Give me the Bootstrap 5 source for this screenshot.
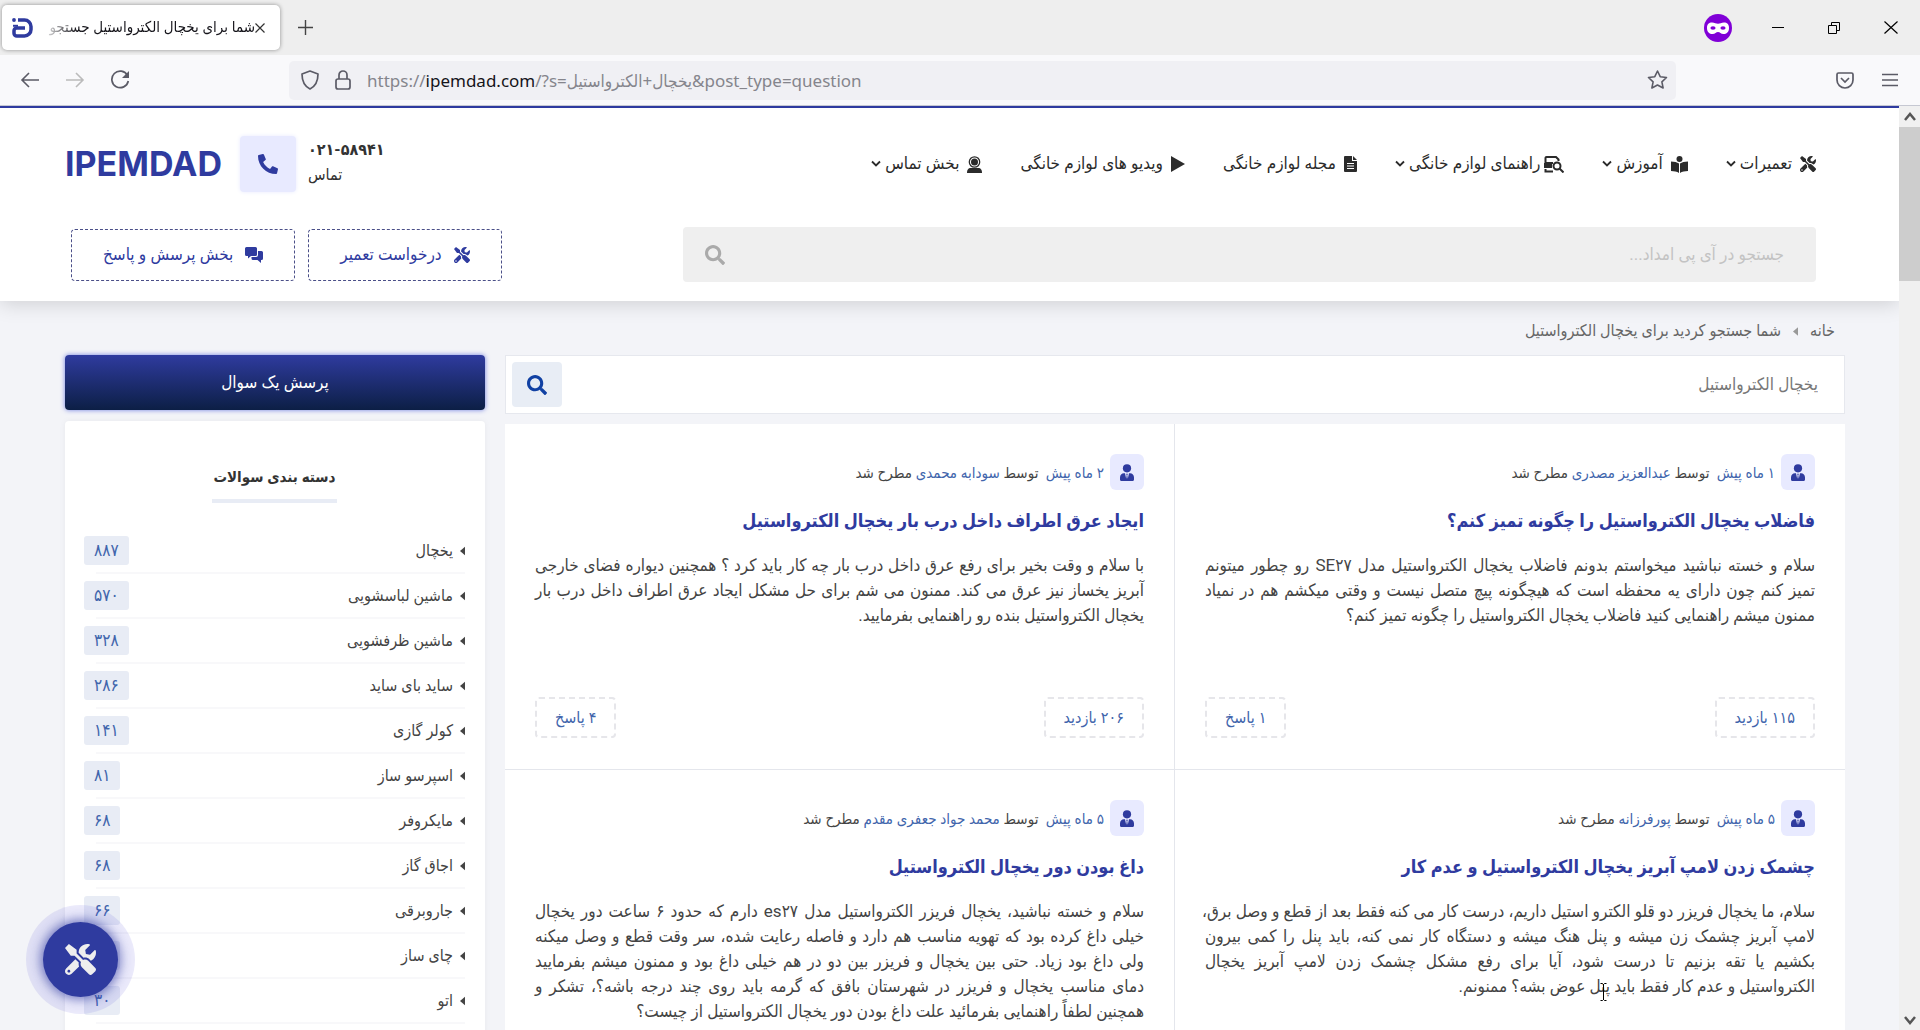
<!DOCTYPE html>
<html lang="fa">
<head>
<meta charset="utf-8">
<meta name="viewport" content="width=device-width, initial-scale=1">
<title>شما برای یخچال الکترواستیل جستجو کردید</title>
<link href="https://cdn.jsdelivr.net/npm/bootstrap@5.3.0/dist/css/bootstrap.min.css" rel="stylesheet">
<style>
:root{--brand:#2f3b9f;--ink:#333;--tint:#e8eaff;--chip:#e8ecf5;--link:#4165ac;--fa:Roboto,"DejaVu Sans Condensed","DejaVu Sans",sans-serif}
body{height:100vh;overflow:hidden;font-family:var(--fa);font-size:16px;color:var(--ink);background:#f3f4f8}
svg{display:block;flex:none}
a{text-decoration:none;color:inherit}
.plain-btn{border:0;background:none;padding:0;color:inherit}
/* browser frame */
.tab-strip{background:#eee;height:55px;padding:5px 22px 5px 2px}
.tab-item{width:278px;height:45px;background:#fff;border-radius:5px;box-shadow:0 0 4px rgba(0,0,0,.4);padding:0 15px 0 10px;font-size:15px;color:#15141a}
.tab-title{margin-left:8px;overflow:hidden;white-space:nowrap;-webkit-mask-image:linear-gradient(90deg,transparent,#000 36px);mask-image:linear-gradient(90deg,transparent,#000 36px)}
.tool-strip{background:#f9f9fb;height:51px;padding:0 22px 0 20px;border-bottom:1px solid #c6c8d2;color:#5b5b66}
.nav-icons{width:269px;gap:25px}
.url-box{background:#f0f0f4;border-radius:5px;height:39px;padding:0 8px;max-width:1387px}
.url-input{font-family:"Noto Sans","DejaVu Sans Condensed",sans-serif;font-size:17px;line-height:24px;padding-top:2px;color:#85858c}
.url-input b{font-weight:400;color:#15141a}
/* scrollbar */
.scroll-rail{width:21px;background:#f0f0f0;color:#555}
.scroll-thumb{height:154px;background:#cdcdcd}
/* site header */
.site-head{background:#fff;border-top:2px solid var(--brand);height:195px;padding:28px 83px 0 65px;box-shadow:0 2px 20px rgba(0,0,0,.16);position:relative;z-index:1}
.brand-word{font-family:Inter,sans-serif;font-weight:700;font-size:34px;line-height:56px;color:var(--brand)}
.phone-block{margin-left:18px}
.phone-text{width:188px;line-height:25px;padding-bottom:4px}
.phone-box{width:56px;height:56px;background:var(--tint);border-radius:4px;color:var(--brand);box-shadow:0 0 4px var(--tint)}
.main-nav{gap:38px;font-size:17px;font-weight:500;color:#2b2b2b}
.main-nav a{white-space:nowrap}
.head-row2{margin-top:35px}
.head-search{background:#efefef;border-radius:4px;height:55px;width:1133px;padding:0 30px 0 22px}
.head-search input,.q-search input{border:0;background:none;outline:0;flex:1;font-size:17px}
.head-search input::placeholder{color:#c3c3c3;opacity:1}
.head-actions{gap:13px;padding-left:6px}
.dash-btn{border:1px dashed #4a4f88;border-radius:4px;height:52px;padding:0 31px;color:var(--brand);font-size:17px;gap:12px;white-space:nowrap}
/* content */
.page-body{padding:0 54px 0 65px}
.crumbs{height:54px;padding:6px 10px 0 0;font-size:16px;color:#666;gap:12px}
.q-search{height:59px;background:#fff;border:1px solid #e6e8ee;padding:0 24px 0 6px;margin-bottom:10px}
.q-search input{color:#777}
.q-search button{width:50px;height:45px;background:#e8edf5;border-radius:4px;color:#1141a3}
.side-col{width:420px;flex:none}
.q-card{height:346px;padding:30px 30px 31px;background:#fff;border-bottom:1px solid #e4e6ec}
.q-card.edge{border-right:1px solid #e4e6ec}
.avatar-chip{width:34px;height:36px;border-radius:6px;background:var(--tint);color:var(--brand)}
.meta-line{font-size:15px;gap:6px;height:36px}
.meta-text{padding-top:3px;color:#444}
.meta-line a{color:var(--link)}
.q-title{font-size:18px;line-height:30px;font-weight:700;color:var(--brand);margin:16px 0;white-space:nowrap}
.q-text{font-size:17px;line-height:25px;margin:0;padding-top:1px;color:#444}
.q-text span{display:block;white-space:nowrap;text-align-last:justify}
.q-text span:last-child{text-align-last:start}
.stat-chip{border:2px dashed #e6e6ea;border-radius:4px;height:41px;padding:0 18px;font-size:16px;color:var(--link)}
.ask-btn{height:55px;border-radius:4px;color:#fff;font-size:17px;font-weight:500;background:linear-gradient(#2f3b9f,#0c1f45);box-shadow:0 0 5px #6f7de0;margin-bottom:11px}
.cat-panel{background:#fff;border-radius:4px 4px 0 0;padding:40px 20px 60px 19px;box-shadow:0 0 6px rgba(0,0,0,.05)}
.cat-title{font-size:15px;font-weight:700;line-height:32px;height:42px;border-bottom:4px solid #e8ecf5;padding:0 1px;margin:0 0 26px}
.cat-list li{height:45px}
.cat-list a{font-size:16px;font-weight:500;gap:7px;height:45px;border-bottom:2px solid #f8f8fa;margin-left:12px;color:#444}
.cat-count{background:var(--chip);border-radius:3px;height:29px;line-height:29px;padding:0 10px;font-size:17px;color:var(--link);margin-left:-12px}
/* overlays */
.help-fab{position:fixed;left:43px;bottom:33px;width:75px;height:75px;border-radius:50%;background:var(--brand);color:#eee;box-shadow:0 0 12px 2px rgba(47,59,159,.7),0 0 0 17px rgba(90,80,220,.12);z-index:5}
.text-cursor{position:fixed;left:1599px;top:983px;z-index:6}
</style>
</head>
<body class="d-flex flex-column">
<svg width="0" height="0" class="position-absolute" aria-hidden="true">
<symbol id="i-tools" viewBox="0 0 512 512"><path fill="currentColor" d="M501.1 395.7L384 278.6c-23.1-23.1-57.6-27.6-85.4-13.9L192 158.1V96L64 0 0 64l96 128h62.1l106.6 106.6c-13.6 27.8-9.2 62.3 13.9 85.4l117.1 117.1c14.6 14.6 38.2 14.6 52.7 0l52.7-52.7c14.5-14.6 14.5-38.2 0-52.7zM331.7 225c28.3 0 54.9 11 74.9 31l19.4 19.4c15.8-6.9 30.8-16.5 43.8-29.5 37.1-37.1 49.7-89.3 37.9-136.7-2.2-9-13.5-12.1-20.1-5.5l-74.4 74.4-67.9-11.3L334 98.9l74.4-74.4c6.6-6.6 3.4-17.9-5.7-20.2-47.4-11.7-99.6.9-136.6 37.9-28.5 28.5-41.9 66.1-41.2 103.6l82.1 82.1c8.1-1.9 16.5-2.9 24.7-2.9zm-103.9 82l-56.7-56.7L18.7 402.8c-25 25-25 65.5 0 90.5s65.5 25 90.5 0l123.6-123.6c-7.6-19.9-9.9-41.6-5-62.7zM64 472c-13.2 0-24-10.8-24-24 0-13.3 10.7-24 24-24s24 10.7 24 24c0 13.2-10.7 24-24 24z"/></symbol>
<symbol id="i-search" viewBox="0 0 512 512"><path fill="currentColor" d="M505 442.7L405.3 343c-4.5-4.5-10.6-7-17-7H372c27.6-35.3 44-79.7 44-128C416 93.1 322.9 0 208 0S0 93.1 0 208s93.1 208 208 208c48.3 0 92.7-16.4 128-44v16.3c0 6.4 2.5 12.5 7 17l99.7 99.7c9.4 9.4 24.6 9.4 33.9 0l28.3-28.3c9.4-9.4 9.4-24.6.1-34zM208 336c-70.7 0-128-57.2-128-128 0-70.7 57.2-128 128-128 70.7 0 128 57.2 128 128 0 70.7-57.2 128-128 128z"/></symbol>
<symbol id="i-phone" viewBox="0 0 512 512"><path fill="currentColor" d="M493 24.600l-104-24c-11.300-2.600-22.900 3.300-27.500 13.900l-48 112c-4.200 9.800-1.400 21.300 6.900 28l60.600 49.600c-36 76.700-98.900 140.500-177.200 177.200l-49.600-60.600c-6.800-8.300-18.200-11.100-28-6.900l-112 48C3.900 366.500-2 378.100.6 389.400l24 104C27.100 504.200 36.700 512 48 512c256.100 0 464-207.500 464-464 0-11.200-7.700-20.900-19-23.400z" transform="matrix(-1 0 0 1 512 0)"/></symbol>
<symbol id="i-chev" viewBox="0 0 10 8"><path d="M1 1.500l4 4 4-4" fill="none" stroke="currentColor" stroke-width="1.800"/></symbol>
<symbol id="i-user" viewBox="0 0 14 17"><circle cx="7" cy="4.300" r="4.100" fill="currentColor"/><path fill="currentColor" d="M4 9.300h1l1.200 5.500.5-3.500-.6-1.600h1.800l-.6 1.600.5 3.500L9 9.300h1c2.400 0 4 1.800 4 4.200V15.500c0 .8-.6 1.500-1.400 1.500H1.400C.6 17 0 16.300 0 15.500v-2c0-2.400 1.600-4.200 4-4.200z"/></symbol>
<symbol id="i-caret" viewBox="0 0 6 10"><path d="M6 0v10L0 5z" fill="currentColor"/></symbol>
</svg>

<header>
  <div class="tab-strip d-flex align-items-center justify-content-between">
    <div class="d-flex align-items-center">
      <div class="tab-item d-flex align-items-center">
        <svg width="21" height="20" viewBox="0 0 21 20" fill="none" stroke="#2f3b9f" stroke-width="3.500"><circle cx="2" cy="2" r="1.900" fill="#2f3b9f" stroke="none"/><path d="M6 2h6.500a6.500 6.500 0 0 1 6.500 6.500v3a6.500 6.500 0 0 1-6.500 6.500H4.800A2.800 2.800 0 0 1 2 15.200V12.800A2.800 2.800 0 0 1 4.800 10H13"/><path d="M1 7.800h5" stroke-width="2"/></svg>
        <div class="tab-title flex-grow-1" dir="rtl">شما برای یخچال الکترواستیل جستجو</div>
        <button class="plain-btn" aria-label="بستن"><svg width="10" height="10" viewBox="0 0 10 10" stroke="#333" stroke-width="1.200"><path d="M.5.5l9 9M9.500.5l-9 9"/></svg></button>
      </div>
      <button class="plain-btn ms-3" aria-label="زبانه جدید"><svg width="19" height="15" viewBox="0 0 19 15" stroke="#444" stroke-width="1.400"><path d="M9.500 0v15M2 7.500h15"/></svg></button>
    </div>
    <div class="d-flex align-items-center" style="gap:40px">
      <svg width="28" height="28" viewBox="0 0 28 28"><circle cx="14" cy="14" r="14" fill="#8000d7"/><path fill="#fff" d="M3 14c0-4 2-5.500 5-5.500 2.600 0 4 1.300 6 1.300s3.400-1.300 6-1.300c3 0 5 1.500 5 5.500 0 4-2.500 6-5.500 6-2.700 0-3.500-2-5.500-2s-2.800 2-5.500 2C5.500 20 3 18 3 14z"/><ellipse cx="9" cy="14" rx="2.600" ry="1.700" fill="#8000d7"/><ellipse cx="19" cy="14" rx="2.600" ry="1.700" fill="#8000d7"/></svg>
      <svg width="12" height="12" viewBox="0 0 12 12" stroke="#000"><path d="M0 5.500h12"/></svg>
      <span class="px-1"><svg width="12" height="12" viewBox="0 0 12 12" fill="none" stroke="#000"><path d="M.5 3.500h8v8h-8zM3.500 3.500v-3h8v8h-3"/></svg></span>
      <svg width="14" height="13" viewBox="0 0 14 13" stroke="#000" stroke-width="1.200"><path d="M.5.5l13 12M13.500.5l-13 12"/></svg>
    </div>
  </div>
  <div class="tool-strip d-flex align-items-center">
    <div class="nav-icons d-flex align-items-center flex-shrink-0">
      <svg width="20" height="18" viewBox="0 0 20 18" fill="none" stroke="currentColor" stroke-width="1.600"><path d="M19 9H2M9 2L2 9l7 7"/></svg>
      <svg width="20" height="18" viewBox="0 0 20 18" fill="none" stroke="#bbb" stroke-width="1.600"><path d="M1 9h17M11 2l7 7-7 7"/></svg>
      <svg width="20" height="20" viewBox="0 0 20 20" fill="none" stroke="currentColor" stroke-width="1.700"><path d="M17.500 5.500A8.300 8.300 0 1 0 18.300 11"/><path d="M19 1v7h-7z" fill="currentColor" stroke="none"/></svg>
    </div>
    <div class="url-box d-flex align-items-center flex-grow-1">
      <svg class="ms-1" width="18" height="20" viewBox="0 0 18 20" fill="none" stroke="currentColor" stroke-width="1.700"><path d="M9 1l8 3c0 7-2 12-8 15C3 16 1 11 1 4z" stroke-linejoin="round"/></svg>
      <svg class="ms-3" width="16" height="20" viewBox="0 0 16 20" fill="none" stroke="currentColor" stroke-width="1.700"><rect x="1" y="9" width="14" height="10" rx="2"/><path d="M4 9V5a4 4 0 0 1 8 0v4"/></svg>
      <div class="url-input flex-grow-1 ms-3" dir="ltr">https://<b>ipemdad.com</b>/?s=یخچال+الکترواستیل&amp;post_type=question</div>
      <svg width="21" height="20" viewBox="0 0 21 20" fill="none" stroke="currentColor" stroke-width="1.600" stroke-linejoin="round"><path d="M10.500 1l2.700 5.700 6.300.8-4.600 4.300 1.200 6.200-5.600-3-5.600 3 1.200-6.200L1.500 7.500l6.300-.8z"/></svg>
    </div>
    <div class="d-flex align-items-center ms-auto" style="gap:28px">
      <svg width="18" height="17" viewBox="0 0 18 17" fill="none" stroke="currentColor" stroke-width="1.700"><path d="M2.500 1h13A1.500 1.500 0 0 1 17 2.500V8A8 8 0 0 1 1 8V2.500A1.500 1.500 0 0 1 2.500 1z"/><path d="M5 6l4 4 4-4"/></svg>
      <svg width="16" height="14" viewBox="0 0 16 14" stroke="currentColor" stroke-width="1.600"><path d="M0 1.500h16M0 7h16M0 12.500h16"/></svg>
    </div>
  </div>
</header>

<div class="d-flex flex-grow-1 overflow-hidden">
<div class="flex-grow-1 overflow-hidden" dir="rtl">
  <div class="site-head">
    <div class="d-flex justify-content-between align-items-center">
      <nav class="main-nav d-flex align-items-center">
        <a href="#" class="d-flex align-items-center gap-1"><svg class="ms-1" width="16" height="16"><use href="#i-tools"/></svg>تعمیرات<svg width="10" height="8"><use href="#i-chev"/></svg></a>
        <a href="#" class="d-flex align-items-center gap-1"><svg class="ms-1" width="17" height="17" viewBox="0 0 17 17" fill="currentColor"><circle cx="8.500" cy="3" r="3"/><path d="M8 7.500C6 6 3.500 5.500 0 5.400v9.600c3 .1 6 .6 8 2zM9 7.500c2-1.500 4.500-2 8-2.100v9.600c-3 .1-6 .6-8 2z"/></svg>آموزش<svg width="10" height="8"><use href="#i-chev"/></svg></a>
        <a href="#" class="d-flex align-items-center gap-1"><svg width="20" height="17" viewBox="0 0 20 17" fill="none" stroke="currentColor" stroke-width="2"><path d="M1.500 10V2A1 1 0 0 1 2.500 1H12l2.500 2.500V5M1.500 7H9M1.500 13v2.500H9"/><path d="M0 7h8v5H0z" fill="currentColor" stroke="none"/><circle cx="13" cy="10" r="3.500"/><path d="M15.500 12.500l4 4"/></svg>راهنمای لوازم خانگی<svg width="10" height="8"><use href="#i-chev"/></svg></a>
        <a href="#" class="d-flex align-items-center gap-2"><svg width="13" height="16" viewBox="0 0 13 16"><path fill="currentColor" d="M1 0h7v5h5v10a1 1 0 0 1-1 1H1a1 1 0 0 1-1-1V1a1 1 0 0 1 1-1zM9 0l4 4H9z"/><path d="M3 7.500h7M3 10h7M3 12.500h7" stroke="#fff"/></svg>مجله لوازم خانگی</a>
        <a href="#" class="d-flex align-items-center gap-2"><svg width="14" height="16" viewBox="0 0 14 16"><path fill="currentColor" d="M0 0l14 8-14 8z"/></svg>ویدیو های لوازم خانگی</a>
        <a href="#" class="d-flex align-items-center gap-1"><svg class="ms-1" width="15" height="17" viewBox="0 0 15 17"><circle cx="7.500" cy="6" r="5.200" fill="none" stroke="currentColor" stroke-width="1.300"/><circle cx="7.500" cy="6" r="3.500" fill="currentColor"/><path fill="currentColor" d="M0 17c0-3 1-5 4-5h7c3 0 4 2 4 5z"/></svg>بخش تماس<svg width="10" height="8"><use href="#i-chev"/></svg></a>
      </nav>
      <div class="d-flex align-items-center" dir="ltr">
        <a href="#" class="brand-word">IPEMDAD</a>
        <div class="phone-block d-flex align-items-center">
          <span class="phone-box d-flex align-items-center justify-content-center"><svg width="20" height="20"><use href="#i-phone"/></svg></span>
          <div class="phone-text ms-2 ps-1"><div class="fw-bold">۰۲۱-۵۸۹۴۱</div><div>تماس</div></div>
        </div>
      </div>
    </div>
    <div class="head-row2 d-flex justify-content-between align-items-center">
      <form class="head-search d-flex align-items-center">
        <input type="search" aria-label="جستجو" placeholder="جستجو در آی پی امداد...">
        <button type="button" class="plain-btn" aria-label="جستجو" style="color:#aaa"><svg width="20" height="20"><use href="#i-search"/></svg></button>
      </form>
      <div class="head-actions d-flex">
        <a href="#" class="dash-btn d-flex align-items-center"><svg width="16" height="16"><use href="#i-tools"/></svg>درخواست تعمیر</a>
        <a href="#" class="dash-btn d-flex align-items-center"><svg width="18" height="16" viewBox="0 0 18 16" fill="currentColor"><path d="M1.500 0h9A1.500 1.500 0 0 1 12 1.500v6A1.500 1.500 0 0 1 10.500 9H6l-3 2.500V9H1.500A1.500 1.500 0 0 1 0 7.500v-6A1.500 1.500 0 0 1 1.500 0z"/><path d="M13 4h3.500A1.500 1.500 0 0 1 18 5.500v6a1.500 1.500 0 0 1-1.500 1.500H16v3l-3.500-3H8a1.500 1.500 0 0 1-1.500-1.500V10h4.500A2 2 0 0 0 13 8z"/></svg>بخش پرسش و پاسخ</a>
      </div>
    </div>
  </div>

  <div class="page-body">
    <nav class="crumbs d-flex align-items-center" aria-label="breadcrumb"><a href="#">خانه</a><svg width="5" height="9" style="color:#999"><use href="#i-caret"/></svg><span>شما جستجو کردید برای یخچال الکترواستیل</span></nav>
    <div class="d-flex align-items-start gap-3">
      <main class="flex-grow-1 ms-1">
        <form class="q-search d-flex align-items-center">
          <input type="text" aria-label="جستجوی سوال" value="یخچال الکترواستیل">
          <button type="button" class="plain-btn d-flex align-items-center justify-content-center" aria-label="جستجو"><svg width="20" height="20"><use href="#i-search"/></svg></button>
        </form>
        <div class="row g-0">
          <article class="col-6 q-card d-flex flex-column">
            <div class="meta-line d-flex align-items-center"><span class="avatar-chip d-flex align-items-center justify-content-center"><svg width="14" height="17"><use href="#i-user"/></svg></span><span class="meta-text"><a href="#">۱ ماه پیش</a> &nbsp;توسط <a href="#">عبدالعزیز مصدری</a> مطرح شد</span></div>
            <h2 class="q-title"><a href="#">فاضلاب یخچال الکترواستیل را چگونه تمیز کنم؟</a></h2>
            <p class="q-text"><span>سلام و خسته نباشید میخواستم بدونم فاضلاب یخچال الکترواستیل مدل SE۲۷ رو چطور میتونم</span><span>تمیز کنم چون دارای یه محفظه است که هیچگونه پیچ متصل نیست و وقتی میکشم هم در نمیاد</span><span>ممنون میشم راهنمایی کنید فاضلاب یخچال الکترواستیل را چگونه تمیز کنم؟</span></p>
            <div class="d-flex justify-content-between mt-auto"><a href="#" class="stat-chip d-flex align-items-center">۱۱۵ بازدید</a><a href="#" class="stat-chip d-flex align-items-center">۱ پاسخ</a></div>
          </article>
          <article class="col-6 q-card edge d-flex flex-column">
            <div class="meta-line d-flex align-items-center"><span class="avatar-chip d-flex align-items-center justify-content-center"><svg width="14" height="17"><use href="#i-user"/></svg></span><span class="meta-text"><a href="#">۲ ماه پیش</a> &nbsp;توسط <a href="#">سودابه محمدی</a> مطرح شد</span></div>
            <h2 class="q-title"><a href="#">ایجاد عرق اطراف داخل درب بار یخچال الکترواستیل</a></h2>
            <p class="q-text"><span>با سلام و وقت بخیر برای رفع عرق داخل درب بار چه کار باید کرد ؟ همچنین دیواره فضای خارجی</span><span>آبریز یخساز نیز عرق می کند. ممنون می شم برای حل مشکل ایجاد عرق اطراف داخل درب بار</span><span>یخچال الکترواستیل بنده رو راهنمایی بفرمایید.</span></p>
            <div class="d-flex justify-content-between mt-auto"><a href="#" class="stat-chip d-flex align-items-center">۲۰۶ بازدید</a><a href="#" class="stat-chip d-flex align-items-center">۴ پاسخ</a></div>
          </article>
          <article class="col-6 q-card d-flex flex-column">
            <div class="meta-line d-flex align-items-center"><span class="avatar-chip d-flex align-items-center justify-content-center"><svg width="14" height="17"><use href="#i-user"/></svg></span><span class="meta-text"><a href="#">۵ ماه پیش</a> &nbsp;توسط <a href="#">پورفرزانه</a> مطرح شد</span></div>
            <h2 class="q-title"><a href="#">چشمک زدن لامپ آبریز یخچال الکترواستیل و عدم کار</a></h2>
            <p class="q-text"><span>سلام، ما یخچال فریزر دو قلو الکترو استیل داریم، درست کار می کنه فقط بعد از قطع و وصل برق،</span><span>لامپ آبریز چشمک زن میشه و پنل هنگ میشه و دستگاه کار نمی کنه، باید پنل را کمی بیرون</span><span>بکشیم یا تقه بزنیم تا درست شود، آیا برای رفع مشکل چشمک زدن لامپ آبریز یخچال</span><span>الکترواستیل و عدم کار فقط باید پنل عوض بشه؟ ممنونم.</span></p>
          </article>
          <article class="col-6 q-card edge d-flex flex-column">
            <div class="meta-line d-flex align-items-center"><span class="avatar-chip d-flex align-items-center justify-content-center"><svg width="14" height="17"><use href="#i-user"/></svg></span><span class="meta-text"><a href="#">۵ ماه پیش</a> &nbsp;توسط <a href="#">محمد جواد جعفری مقدم</a> مطرح شد</span></div>
            <h2 class="q-title"><a href="#">داغ بودن دور یخچال الکترواستیل</a></h2>
            <p class="q-text"><span>سلام و خسته نباشید، یخچال فریزر الکترواستیل مدل es۲۷ دارم که حدود ۶ ساعت دور یخچال</span><span>خیلی داغ کرده بود که تهویه مناسب هم دارد و فاصله رعایت شده، سر وقت قطع و وصل میکنه</span><span>ولی داغ بود زیاد. حتی بین یخچال و فریزر بین دو در هم خیلی داغ بود و ممنون میشم بفرمایید</span><span>دمای مناسب یخچال و فریزر در شهرستان بافق که گرمه باید روی چند درجه باشه؟، تشکر و</span><span>همچنین لطفاً راهنمایی بفرمائید علت داغ بودن دور یخچال الکترواستیل از چیست؟</span></p>
          </article>
        </div>
      </main>
      <aside class="side-col">
        <button class="ask-btn plain-btn w-100">پرسش یک سوال</button>
        <section class="cat-panel d-flex flex-column align-items-center">
          <h3 class="cat-title">دسته بندی سوالات</h3>
          <ul class="cat-list list-unstyled w-100 mb-0 p-0">
            <li><a href="#" class="d-flex align-items-center"><svg width="5" height="10"><use href="#i-caret"/></svg>یخچال<span class="cat-count me-auto">۸۸۷</span></a></li>
            <li><a href="#" class="d-flex align-items-center"><svg width="5" height="10"><use href="#i-caret"/></svg>ماشین لباسشویی<span class="cat-count me-auto">۵۷۰</span></a></li>
            <li><a href="#" class="d-flex align-items-center"><svg width="5" height="10"><use href="#i-caret"/></svg>ماشین ظرفشویی<span class="cat-count me-auto">۳۲۸</span></a></li>
            <li><a href="#" class="d-flex align-items-center"><svg width="5" height="10"><use href="#i-caret"/></svg>ساید بای ساید<span class="cat-count me-auto">۲۸۶</span></a></li>
            <li><a href="#" class="d-flex align-items-center"><svg width="5" height="10"><use href="#i-caret"/></svg>کولر گازی<span class="cat-count me-auto">۱۴۱</span></a></li>
            <li><a href="#" class="d-flex align-items-center"><svg width="5" height="10"><use href="#i-caret"/></svg>اسپرسو ساز<span class="cat-count me-auto">۸۱</span></a></li>
            <li><a href="#" class="d-flex align-items-center"><svg width="5" height="10"><use href="#i-caret"/></svg>مایکروفر<span class="cat-count me-auto">۶۸</span></a></li>
            <li><a href="#" class="d-flex align-items-center"><svg width="5" height="10"><use href="#i-caret"/></svg>اجاق گاز<span class="cat-count me-auto">۶۸</span></a></li>
            <li><a href="#" class="d-flex align-items-center"><svg width="5" height="10"><use href="#i-caret"/></svg>جاروبرقی<span class="cat-count me-auto">۶۶</span></a></li>
            <li><a href="#" class="d-flex align-items-center"><svg width="5" height="10"><use href="#i-caret"/></svg>چای ساز<span class="cat-count me-auto">۴۴</span></a></li>
            <li><a href="#" class="d-flex align-items-center"><svg width="5" height="10"><use href="#i-caret"/></svg>اتو<span class="cat-count me-auto">۳۰</span></a></li>
          </ul>
        </section>
      </aside>
    </div>
  </div>
</div>
<div class="scroll-rail d-flex flex-column align-items-center flex-shrink-0">
  <svg class="my-1" width="12" height="13" viewBox="0 0 12 13" fill="none" stroke="currentColor" stroke-width="2.500"><path d="M1 10l5-6 5 6"/></svg>
  <div class="scroll-thumb w-100"></div>
  <svg class="mt-auto mb-1" width="12" height="10" viewBox="0 0 12 10" fill="none" stroke="currentColor" stroke-width="2.500"><path d="M1 1l5 6 5-6"/></svg>
</div>
</div>
<button class="help-fab plain-btn d-flex align-items-center justify-content-center" aria-label="پشتیبانی"><svg width="31" height="31"><use href="#i-tools"/></svg></button>
<svg class="text-cursor" width="9" height="18" viewBox="0 0 9 18" fill="none" stroke="#000"><path d="M1.500.5h2l1 1 1-1h2M4.500 1v16M1.500 17.500h2l1-1 1 1h2"/></svg>
<script src="https://cdn.jsdelivr.net/npm/bootstrap@5.3.0/dist/js/bootstrap.bundle.min.js"></script>
</body>
</html>
